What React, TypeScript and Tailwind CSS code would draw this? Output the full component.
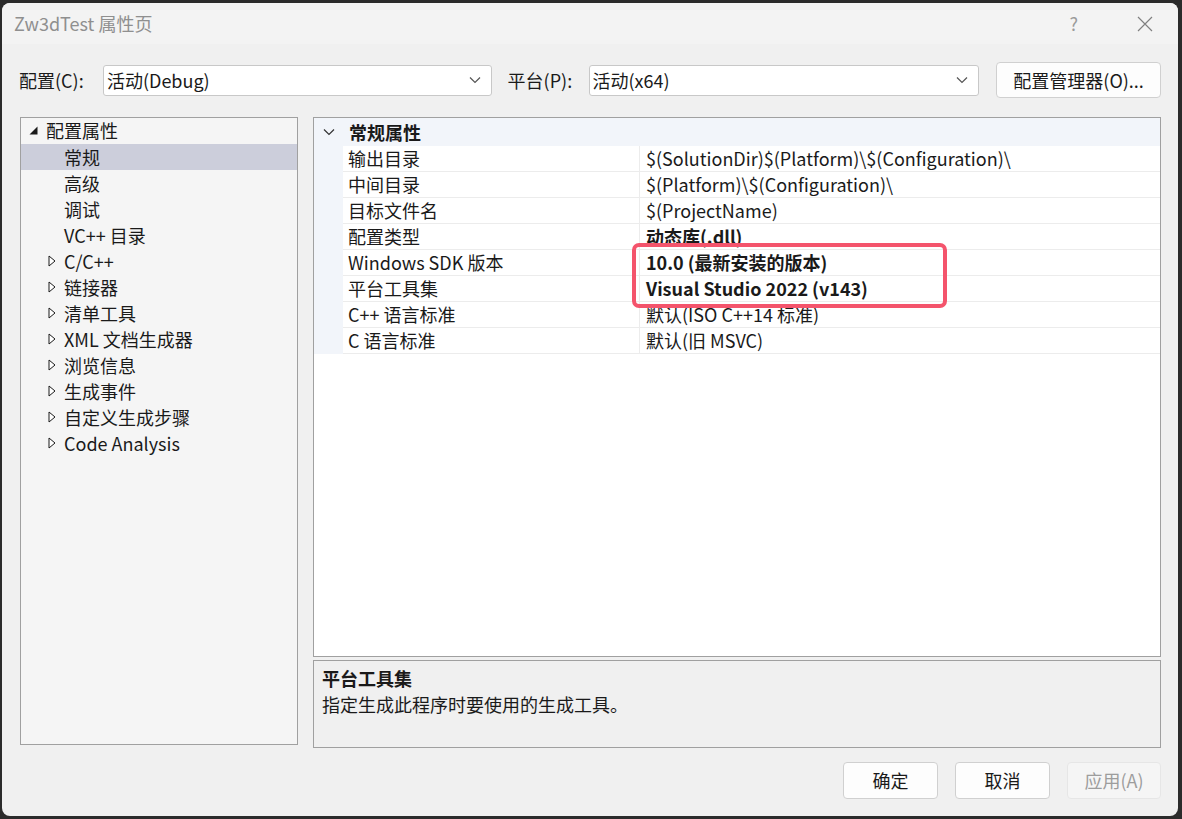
import React from 'react';

const FONT = { fontFamily: '"Noto Sans CJK SC", "Noto Sans", sans-serif' };

function Chevron({ className = '' }: { className?: string }) {
  return (
    <svg className={className} width="12" height="8" viewBox="0 0 12 8" fill="none">
      <path d="M1 1.5l5 5 5-5" stroke="currentColor" strokeWidth="1.2" />
    </svg>
  );
}

function Collapsed() {
  return (
    <svg width="8" height="12" viewBox="0 0 8 12" className="shrink-0">
      <path d="M1 1v10l6-5z" fill="white" stroke="#1a1a1a" strokeWidth="1" />
    </svg>
  );
}

const treeChildren = ['C/C++', '链接器', '清单工具', 'XML 文档生成器', '浏览信息', '生成事件', '自定义生成步骤', 'Code Analysis'];

const props: { name: string; value: string; bold?: boolean }[] = [
  { name: '输出目录', value: '$(SolutionDir)$(Platform)\\$(Configuration)\\' },
  { name: '中间目录', value: '$(Platform)\\$(Configuration)\\' },
  { name: '目标文件名', value: '$(ProjectName)' },
  { name: '配置类型', value: '动态库(.dll)', bold: true },
  { name: 'Windows SDK 版本', value: '10.0 (最新安装的版本)', bold: true },
  { name: '平台工具集', value: 'Visual Studio 2022 (v143)', bold: true },
  { name: 'C++ 语言标准', value: '默认(ISO C++14 标准)' },
  { name: 'C 语言标准', value: '默认(旧 MSVC)' },
];

export default function App() {
  return (
    <div className="w-[1182px] h-[819px] bg-[#2b2b2b] pt-[3px] pl-[2px] pr-[4px] pb-[3px] text-[#1a1a1a]" style={FONT}>
      <div className="h-full rounded-[8px] bg-[#f0f0f0] overflow-hidden flex flex-col">
        {/* title bar */}
        <div className="h-[41px] bg-[#f3f3f3] flex items-center pl-[12px] pr-[25px] shrink-0">
          <span className="text-[18px] text-[#8f8f8f]">Zw3dTest 属性页</span>
          <span className="ml-auto text-[18px] text-[#9a9a9a] mr-[59px]">?</span>
          <svg width="16" height="16" viewBox="0 0 16 16" className="text-[#808080]">
            <path d="M1 1l14 14M15 1L1 15" stroke="currentColor" strokeWidth="1.2" />
          </svg>
        </div>

        {/* config row */}
        <div className="flex items-center h-[36px] mt-[18px] pl-[17px] pr-[17px] text-[18px]">
          <span className="w-[84px]">配置(C):</span>
          <div className="w-[389px] h-[31px] bg-white border border-[#c8c8c8] rounded-[3px] flex items-center pl-[3px] pr-[10px]">
            <span>活动(Debug)</span>
            <Chevron className="ml-auto text-[#555]" />
          </div>
          <span className="ml-[16px] w-[81px]">平台(P):</span>
          <div className="w-[391px] h-[31px] bg-white border border-[#c8c8c8] rounded-[3px] flex items-center pl-[3px] pr-[10px]">
            <span>活动(x64)</span>
            <Chevron className="ml-auto text-[#555]" />
          </div>
          <button className="ml-[17px] w-[165px] h-[36px] bg-[#fdfdfd] border border-[#d0d0d0] rounded-[4px] text-[18px]">
            配置管理器(O)...
          </button>
        </div>

        {/* main */}
        <div className="flex mt-[19px] pl-[18px] pr-[17px] gap-[15px]">
          {/* tree */}
          <div className="w-[278px] h-[628px] bg-[#f5f5f5] border border-[#a0a0a0] text-[18px] leading-[26px]">
            <div className="flex items-center h-[26px] pl-[8px] -mt-[1px]">
              <svg width="9" height="9" viewBox="0 0 9 9" className="mr-[8px]">
                <path d="M8.5 0.5v8h-8z" fill="#1a1a1a" />
              </svg>
              <span>配置属性</span>
            </div>
            <div className="h-[26px] pl-[43px] bg-[#cccedb] mt-[1px]">常规</div>
            <div className="h-[26px] pl-[43px]">高级</div>
            <div className="h-[26px] pl-[43px]">调试</div>
            <div className="h-[26px] pl-[43px]">VC++ 目录</div>
            {treeChildren.map((t) => (
              <div key={t} className="flex items-center h-[26px] pl-[27px] gap-[8px]">
                <Collapsed />
                <span>{t}</span>
              </div>
            ))}
          </div>

          {/* right column */}
          <div className="flex-1 flex flex-col gap-[3px]">
            <div className="relative h-[540px] bg-white border border-[#a0a0a0] text-[18px]">
              <div className="flex items-center h-[28px] bg-[#f2f5fa]">
                <div className="w-[29px] flex justify-center">
                  <Chevron className="text-[#333]" />
                </div>
                <span className="font-bold pl-[6px]">常规属性</span>
              </div>
              {props.map((p) => (
                <div key={p.name} className="flex h-[26px] leading-[25px]">
                  <div className="w-[29px] bg-[#f2f5fa]" />
                  <div className="flex flex-1 border-b border-[#ececec]">
                    <div className="w-[297px] pl-[5px] border-r border-[#ececec]">{p.name}</div>
                    <div className={`pl-[6px] ${p.bold ? 'font-bold' : ''}`}>{p.value}</div>
                  </div>
                </div>
              ))}
              <div className="absolute left-[318px] top-[125px] w-[315px] h-[65px] border-[4px] border-[#f4546c] rounded-[7px]" />
            </div>
            <div className="h-[88px] bg-[#f0f0f0] border border-[#a0a0a0] px-[8px] pt-[4px] text-[18px] leading-[26px]">
              <div className="font-bold">平台工具集</div>
              <div>指定生成此程序时要使用的生成工具。</div>
            </div>
          </div>
        </div>

        {/* buttons */}
        <div className="flex justify-end gap-[17px] mt-[14px] pr-[17px] text-[18px]">
          <button className="w-[95px] h-[37px] bg-[#fdfdfd] border border-[#d0d0d0] rounded-[4px]">确定</button>
          <button className="w-[95px] h-[37px] bg-[#fdfdfd] border border-[#d0d0d0] rounded-[4px]">取消</button>
          <button className="w-[94px] h-[37px] bg-[#f5f5f5] border border-[#e6e6e6] rounded-[4px] text-[#9d9d9d]">应用(A)</button>
        </div>
      </div>
    </div>
  );
}
